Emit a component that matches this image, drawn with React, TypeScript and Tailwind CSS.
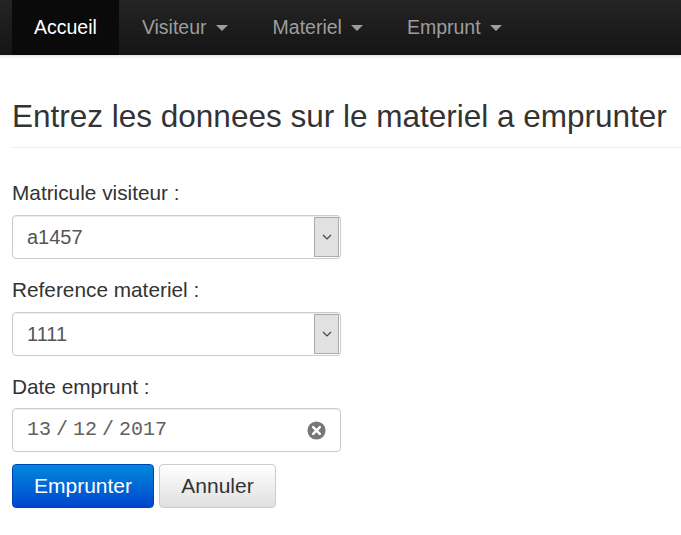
import React from "react";

function Caret() {
  return (
    <span className="ml-[9px] inline-block h-0 w-0 border-x-[6px] border-t-[6px] border-x-transparent border-t-[#9d9d9d] align-middle" />
  );
}

function SelectBox({ value }: { value: string }) {
  return (
    <div className="flex h-[44px] w-[329px] items-stretch rounded-[4px] border border-[#ccc] bg-white shadow-[inset_0_1px_1px_rgba(0,0,0,0.075)]">
      <div className="flex flex-1 items-center pl-[14px] text-[20px] text-[#555]">{value}</div>
      <div className="my-[1px] mr-[1px] flex w-[25px] items-center justify-center border border-[#ababab] bg-[#e1e1e1]">
        <svg width="10" height="6" viewBox="0 0 10 6">
          <path d="M1 1 L5 5 L9 1" fill="none" stroke="#444" strokeWidth="1.2" />
        </svg>
      </div>
    </div>
  );
}

export default function App() {
  return (
    <div className="min-h-[535px] bg-white font-['Liberation_Sans',Arial,sans-serif] text-[#333]">
      <nav className="flex h-[55px] bg-gradient-to-b from-[#242424] to-[#151515] px-[12px] shadow-[0_1px_3px_rgba(0,0,0,0.15)]">
        <a className="flex items-center bg-[#0a0a0a] px-[22px] text-[19.5px] text-white">Accueil</a>
        <a className="flex items-center px-[23px] text-[19.5px] text-[#9d9d9d]">
          Visiteur
          <Caret />
        </a>
        <a className="flex items-center px-[22px] text-[19.5px] text-[#9d9d9d]">
          Materiel
          <Caret />
        </a>
        <a className="flex items-center px-[22px] text-[19.5px] text-[#9d9d9d]">
          Emprunt
          <Caret />
        </a>
      </nav>
      <div className="pl-[12px]">
        <h1 className="mt-[42px] text-[31.5px] leading-[38px] text-[#333]">
          Entrez les donnees sur le materiel a emprunter
        </h1>
        <hr className="mt-[12px] border-t border-[#eee]" />
        <div className="mt-[32px] flex flex-col">
          <label className="text-[20.8px] leading-[26px]">Matricule visiteur :</label>
          <div className="mt-[9px]">
            <SelectBox value="a1457" />
          </div>
          <label className="mt-[18px] text-[20.8px] leading-[26px]">Reference materiel :</label>
          <div className="mt-[9px]">
            <SelectBox value="1111" />
          </div>
          <label className="mt-[18px] text-[20.8px] leading-[26px]">Date emprunt :</label>
          <div className="mt-[8px] flex h-[44px] w-[329px] items-center justify-between rounded-[4px] border border-[#ccc] bg-white pl-[14px] pr-[14px] shadow-[inset_0_1px_1px_rgba(0,0,0,0.075)]">
            <span className="flex items-center font-['Liberation_Mono','Courier_New',monospace] text-[20px] text-[#606060]">
              <span>13</span>
              <span className="mx-[5px]">/</span>
              <span>12</span>
              <span className="mx-[5px]">/</span>
              <span>2017</span>
            </span>
            <svg width="19" height="19" viewBox="0 0 20 20">
              <circle cx="10" cy="10" r="9.5" fill="#777" />
              <path d="M6.5 6.5 L13.5 13.5 M13.5 6.5 L6.5 13.5" stroke="#fff" strokeWidth="2.6" strokeLinecap="round" />
            </svg>
          </div>
          <div className="mt-[12px] flex gap-[5px]">
            <button className="h-[44px] w-[142px] rounded-[4px] border border-[#0044bb] bg-gradient-to-b from-[#0088dd] to-[#0044cc] text-[21px] text-white">
              Emprunter
            </button>
            <button className="h-[44px] w-[117px] rounded-[4px] border border-[#ccc] bg-gradient-to-b from-white to-[#e0e0e0] text-[21px] text-[#333]">
              Annuler
            </button>
          </div>
        </div>
      </div>
    </div>
  );
}
